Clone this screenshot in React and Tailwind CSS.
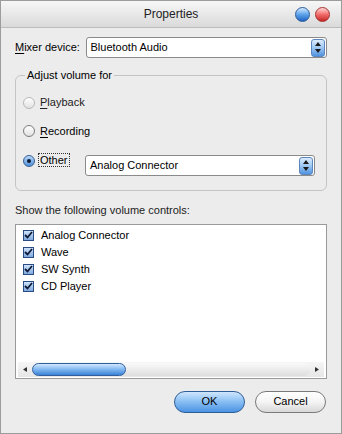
import React from 'react';

const UpDown = () => (
  <span className="flex h-[18px] w-[14px] items-center justify-center rounded-[3px] border border-[#5d86bd] bg-gradient-to-b from-[#dcecfd] via-[#9cc6f3] to-[#4f93df]">
    <svg width="6" height="11" viewBox="0 0 6 11">
      <path d="M3 0 L6 4 L0 4 Z" fill="#1a1a1a" />
      <path d="M0 7 L6 7 L3 11 Z" fill="#1a1a1a" />
    </svg>
  </span>
);

const Select = ({ value, className }) => (
  <div className={`flex h-[21px] items-center justify-between rounded-[3px] border border-[#8a8a8a] bg-white pl-[4px] pr-[1px] ${className}`}>
    <span>{value}</span>
    <UpDown />
  </div>
);

const Radio = ({ state }) => {
  if (state === 'on') {
    return (
      <span className="flex h-[12px] w-[12px] items-center justify-center rounded-full border border-[#3b5f92] bg-gradient-to-b from-[#b9d9fb] to-[#4f8fd8]">
        <span className="h-[4px] w-[4px] rounded-full bg-[#0c1a33]" />
      </span>
    );
  }
  return (
    <span className={`h-[12px] w-[12px] rounded-full border bg-gradient-to-b from-[#ffffff] to-[#e2e2e2] ${state === 'off' ? 'border-[#7c7c7c]' : 'border-[#b8b8b8]'}`} />
  );
};

const Check = () => (
  <span className="flex h-[11px] w-[11px] items-center justify-center border border-[#2a4c85] bg-gradient-to-b from-[#cfe3fa] to-[#7ea9de]">
    <svg width="9" height="8" viewBox="0 0 9 8">
      <path d="M1 4 L3.5 6.5 L8 1" stroke="#0e1a36" strokeWidth="1.8" fill="none" />
    </svg>
  </span>
);

const U = ({ children }) => <span className="underline decoration-1 underline-offset-2">{children}</span>;

const controls = ['Analog Connector', 'Wave', 'SW Synth', 'CD Player'];

export default function App() {
  return (
    <div className="flex h-[434px] w-[342px] flex-col border border-[#9c9c9c] bg-[#ececec] text-[11px] text-black" style={{ fontFamily: 'Tahoma, "Liberation Sans", Arial, sans-serif' }}>
      {/* title bar */}
      <div className="flex h-[27px] shrink-0 items-center border-b border-[#bcbcbc] bg-gradient-to-b from-[#f7f7f7] to-[#dadada]">
        <div className="w-[46px]" />
        <div className="flex-1 text-center text-[12px] text-[#222]">Properties</div>
        <div className="flex w-[46px] items-center gap-[5px] pr-[5px]">
          <span className="h-[15px] w-[15px] rounded-full border border-[#2d5c9a] bg-gradient-to-b from-[#d3eaff] via-[#5ea3ea] to-[#1d63c4]" />
          <span className="h-[15px] w-[15px] rounded-full border border-[#a33030] bg-gradient-to-b from-[#ffd6d6] via-[#f06b6b] to-[#c62121]" />
        </div>
      </div>

      <div className="flex flex-1 flex-col px-[14px] pt-[9px]">
        <div className="flex items-center">
          <span className="w-[72px]"><U>M</U>ixer device:</span>
          <Select value="Bluetooth Audio" className="ml-[-1px] w-[243px]" />
        </div>

        <fieldset className="mt-[9px] h-[124px] rounded-[6px] border border-[#c4c4c4] px-[7px] pt-[5px]">
          <legend className="ml-[2px] px-[2px]">Adjust volume for</legend>
          <div className="flex flex-col">
            <label className="flex h-[28px] items-center gap-[5px] text-[#222]">
              <Radio state="disabled" />
              <span><U>P</U>layback</span>
            </label>
            <label className="flex h-[29px] items-center gap-[5px]">
              <Radio state="off" />
              <span><U>R</U>ecording</span>
            </label>
            <div className="flex h-[30px] items-center">
              <Radio state="on" />
              <span className="ml-[4px] w-[46px]">
                <span className="outline outline-1 outline-dotted outline-[#333] px-[1px]">Other</span>
              </span>
              <Select value="Analog Connector" className="mt-[10px] w-[230px]" />
            </div>
          </div>
        </fieldset>

        <div className="mt-[11px] text-[#222]">Show the following volume controls:</div>

        <div className="mt-[5px] flex h-[155px] flex-col border border-[#9a9a9a] bg-white">
          <div className="flex flex-1 flex-col pl-[7px] pt-[2px]">
            {controls.map((c) => (
              <div key={c} className="flex h-[17px] items-center gap-[7px]">
                <Check />
                <span>{c}</span>
              </div>
            ))}
          </div>
          <div className="mx-[2px] mb-[1px] flex h-[15px] items-center bg-gradient-to-b from-[#f6f6f6] to-[#e6e6e6]">
            <svg width="14" height="15" viewBox="0 0 14 15" className="shrink-0">
              <path d="M5 7.5 L9 5 L9 10 Z" fill="#333" />
            </svg>
            <div className="relative flex h-[13px] flex-1 items-center rounded-full bg-gradient-to-b from-[#fafafa] to-[#dedede]">
              <span className="h-[13px] w-[94px] rounded-full border border-[#2f5f9e] bg-gradient-to-b from-[#d2e8ff] via-[#7fb7f0] to-[#3b82d6]" />
            </div>
            <svg width="14" height="15" viewBox="0 0 14 15" className="shrink-0">
              <path d="M9 7.5 L5 5 L5 10 Z" fill="#333" />
            </svg>
          </div>
        </div>

        <div className="mt-[12px] flex justify-end gap-[10px] pr-[1px]">
          <button className="h-[22px] w-[71px] rounded-full border border-[#2f5d95] bg-gradient-to-b from-[#cfe6fd] via-[#86bdf3] to-[#4a93e2] text-[11px]">OK</button>
          <button className="h-[22px] w-[71px] rounded-full border border-[#7a7a7a] bg-gradient-to-b from-[#ffffff] via-[#f4f4f4] to-[#d8d8d8] text-[11px]">Cancel</button>
        </div>
      </div>
    </div>
  );
}
